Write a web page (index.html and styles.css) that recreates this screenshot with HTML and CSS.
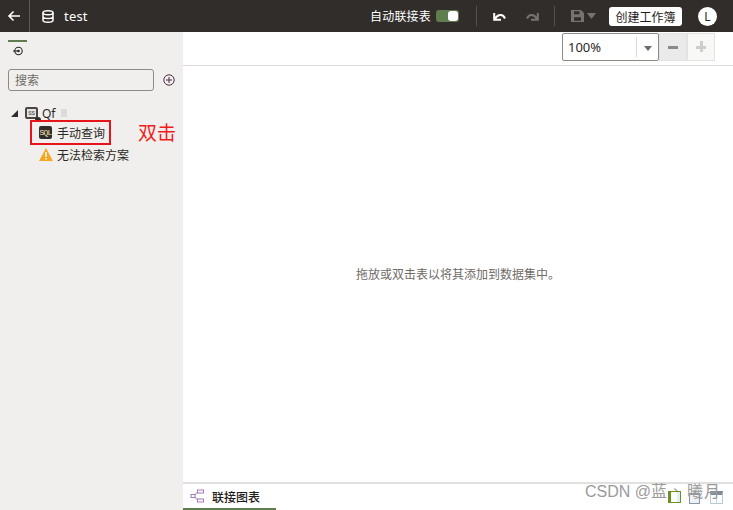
FILE: index.html
```html
<!DOCTYPE html>
<html lang="zh">
<head>
<meta charset="utf-8">
<title>test</title>
<link rel="stylesheet" href="styles.css">
</head>
<body>
<div class="app">
  <header class="topbar">
    <button class="back" aria-label="back">
      <svg width="14" height="12" viewBox="0 0 14 12"><path d="M13 6H2M6.500 1.500 2 6l4.500 4.500" fill="none" stroke="#fff" stroke-width="1.600"/></svg>
    </button>
    <div class="title">
      <svg width="12" height="13" viewBox="0 0 12 13"><g fill="none" stroke="#fff" stroke-width="1.500"><ellipse cx="6" cy="2.800" rx="5" ry="2"/><path d="M1 2.800v7.400c0 1.100 2.200 2 5 2s5-.9 5-2V2.800M1 6.500c0 1.100 2.200 2 5 2s5-.9 5-2"/></g></svg>
      <span class="name">test</span>
    </div>
    <div class="tools">
      <span class="auto">自动联接表</span>
      <span class="toggle"><i></i></span>
      <span class="sep s1"></span>
      <svg class="undo" width="13" height="9" viewBox="0 0 13 9"><path d="M1.200 1v6.800H8M1.800 7.200C4 3 9.500 .5 12 6.500" fill="none" stroke="#fff" stroke-width="2"/></svg>
      <svg class="redo" width="13" height="9" viewBox="0 0 13 9"><path d="M11.800 1v6.800H5M11.200 7.200C9 3 3.500 .5 1 6.500" fill="none" stroke="#77736f" stroke-width="2"/></svg>
      <span class="sep s2"></span>
      <svg class="save" width="13" height="12" viewBox="0 0 13 12"><path fill-rule="evenodd" d="M0 0h10l3 3v9H0zM3 1.200v3h5.500v-3zM3 7.200v3.600h7V7.200z" fill="#77736f"/></svg>
      <svg class="caret" width="9" height="6" viewBox="0 0 9 6"><path d="M0 0h9L4.500 6z" fill="#77736f"/></svg>
      <button class="create">创建工作簿</button>
      <span class="avatar">L</span>
    </div>
  </header>
  <div class="body">
    <aside class="side">
      <div class="sidetab">
        <svg width="12" height="10" viewBox="0 0 12 10"><circle cx="6.500" cy="5" r="3.700" fill="none" stroke="#2b2724" stroke-width="1.100"/><circle cx="6.500" cy="5" r="1.300" fill="#2b2724"/><path d="M1 5h5" stroke="#2b2724" stroke-width="1.100"/></svg>
      </div>
      <div class="search">
        <div class="input">搜索</div>
        <svg width="12" height="12" viewBox="0 0 12 12"><circle cx="6" cy="6" r="5.200" fill="none" stroke="#4a2f46" stroke-width="1"/><path d="M6 3v6M3 6h6" stroke="#4a2f46" stroke-width="1"/></svg>
      </div>
      <ul class="tree">
        <li class="conn">
          <svg class="tri" width="7" height="7" viewBox="0 0 7 7"><path d="M7 0v7H0z" fill="#2f2d2b"/></svg>
          <span class="db">SS</span>
          <span class="qf">Qf</span><span class="blur"></span>
        </li>
        <li class="item sql">
          <span class="sqlicon">SQL</span>
          <span>手动查询</span>
          <span class="hint">双击</span>
        </li>
        <li class="item warn">
          <svg width="14" height="13" viewBox="0 0 14 13"><path d="M7 0 14 13H0z" fill="#f5a623"/><path d="M7 4v5M7 10v1.500" stroke="#fff" stroke-width="1.500"/></svg>
          <span>无法检索方案</span>
        </li>
      </ul>
    </aside>
    <main class="main">
      <div class="zoombar">
        <div class="zoom"><span class="val">100%</span><span class="drop"><svg width="8" height="5" viewBox="0 0 8 5"><path d="M0 0h8L4 5z" fill="#6f6b67"/></svg></span></div>
        <button class="zb minus"><i></i></button>
        <button class="zb plus"><i></i><b></b></button>
      </div>
      <div class="canvas">拖放或双击表以将其添加到数据集中。</div>
      <footer class="tabs">
        <div class="tab">
          <svg width="14" height="14" viewBox="0 0 14 14"><g fill="#fff" stroke="#a878b8" stroke-width="1"><rect x="7.500" y="1" width="6" height="3"/><rect x="7.500" y="10" width="6" height="3"/><rect x="1" y="5.500" width="4" height="3"/></g><path d="M5 6 7.500 3M5 8l2.500 3" stroke="#8a8a8a" stroke-width="1"/></svg>
          <span>联接图表</span>
        </div>
      </footer>
    </main>
  </div>
  <div class="overlay">
    <span class="mark">CSDN @蓝</span>
    <span class="stroke">丶</span>
    <span class="m-a"></span>
    <span class="m-b"></span>
    <span class="m-c"></span>
    <span class="m2">曦月</span>
  </div>
</div>
</body>
</html>
```
FILE: styles.css
```css
* { box-sizing: border-box; }
html, body { margin: 0; height: 100%; }
body { font-family: "Noto Sans CJK SC", "Liberation Sans", sans-serif; color: #2b2724; background: #fff; overflow: hidden; }
ul { list-style: none; margin: 0; padding: 0; }
button { font: inherit; border: 0; padding: 0; background: none; }
.app { width: 733px; height: 510px; display: flex; flex-direction: column; position: relative; overflow: hidden; }

.topbar { height: 32px; background: #312d2a; display: flex; align-items: center; flex: none; color: #fff; }
.back { width: 30px; height: 32px; border-right: 1px solid #5c5855; display: flex; align-items: center; justify-content: center; padding-right: 1px; }
.title { display: flex; align-items: center; padding-left: 12px; gap: 10px; }
.name { font: 13px "Noto Sans", sans-serif; letter-spacing: .2px; }
.tools { margin-left: auto; display: flex; align-items: center; padding-right: 16px; }
.auto { font-size: 12px; line-height: 16px; letter-spacing: .2px; }
.toggle { width: 23px; height: 12px; background: #5f7d4f; border-radius: 3px; margin-left: 5px; display: flex; justify-content: flex-end; padding: 1px; }
.toggle i { width: 10px; height: 10px; background: #fff; border-radius: 3px; }
.sep { width: 1px; height: 20px; background: #55514e; }
.s1 { margin: 0 16px 0 17px; }
.undo { margin-right: 20px; }
.redo { margin-right: 15px; }
.s2 { margin-right: 16px; }
.caret { margin: 0 0 0 3px; }
.create { margin-left: 13px; width: 73px; height: 19px; background: #fff; color: #1f1c1a; border-radius: 3px; font-size: 12px; line-height: 19px; }
.avatar { margin-left: 16px; width: 19px; height: 19px; border-radius: 50%; background: #fff; color: #2b2724; font: 12px/19px "Noto Sans", sans-serif; text-align: center; }

.body { flex: 1; display: flex; min-height: 0; }
.side { width: 183px; flex: none; background: #f0efed; padding: 8px 8px 0; }
.sidetab { width: 19px; height: 21px; border-top: 2px solid #5f7d4f; display: flex; justify-content: center; align-items: flex-start; padding-top: 4px; }
.search { display: flex; align-items: center; gap: 9px; margin-top: 8px; }
.input { width: 146px; height: 22px; border: 1px solid #8f8a85; border-radius: 3px; background: #f0efed; color: #6f6b67; font-size: 12px; line-height: 20px; padding-left: 6px; }
.tree { margin-top: 11px; font-size: 12px; }
.conn { display: flex; align-items: center; height: 22px; padding-left: 3px; }
.tri { margin-right: 7px; margin-top: 1px; }
.db { width: 13px; height: 12px; border: 2px solid #4a4643; border-radius: 2px; font: 5px/8px "Liberation Sans", sans-serif; text-align: center; background: #e6e4e2; margin-right: 4px; position: relative; }
.db::after { content: ""; position: absolute; right: -5px; bottom: -4px; width: 6px; height: 4px; border-radius: 3px 3px 0 0; background: #312d2a; }
.qf { font: 12px "Noto Sans", sans-serif; }
.blur { width: 6px; height: 8px; background: #dcdbd9; margin-left: 5px; }
.item { display: flex; align-items: center; gap: 5px; }
.sql { position: relative; outline: 2px solid #e8141c; outline-offset: -2px; width: 81px; margin-left: 22px; padding-left: 9px; height: 25px; margin-top: -4px; white-space: nowrap; }
.sqlicon { width: 13px; height: 13px; background: #312d2a; color: #f5e2b8; border-radius: 2px; font: 8px/13px "Liberation Mono", monospace; text-align: center; letter-spacing: -.8px; }
.hint { position: absolute; left: 108px; top: -1px; color: #f01c1c; font-size: 19px; line-height: 25px; }
.warn { height: 21px; padding-left: 31px; margin-top: -1px; gap: 4px; }

.main { flex: 1; display: flex; flex-direction: column; min-width: 0; }
.zoombar { height: 34px; flex: none; border-bottom: 1px solid #dcdbd9; display: flex; align-items: flex-start; padding: 1px 18px 0 379px; }
.zoom { width: 97px; height: 28px; border: 1px solid #8f8a85; border-radius: 2px; display: flex; align-items: center; background: #fff; font: 13px "Noto Sans", sans-serif; flex: none; }
.val { width: 73px; padding-left: 5px; }
.drop { flex: 1; height: 20px; border-left: 1px solid #dcdbd9; display: flex; align-items: center; justify-content: center; padding-top: 3px; }
.zb { width: 28px; height: 28px; position: relative; border: 1px solid #e4e3e1; display: block; flex: none; }
.minus { background: #ebeaea; }
.plus { background: #f8f8f7; }
.zb i { position: absolute; left: 8px; right: 8px; top: 12px; height: 3px; background: #8a8785; }
.plus i { background: #cfcdcb; }
.plus b { position: absolute; top: 7px; bottom: 8px; left: 12px; width: 3px; background: #cfcdcb; }

.canvas { flex: 1; display: flex; align-items: center; justify-content: center; color: #6f6b67; font-size: 12px; padding-bottom: 1px; }
.tabs { height: 28px; flex: none; border-top: 2px solid #e2e1e0; display: flex; }
.tab { width: 93px; display: flex; align-items: center; gap: 8px; padding-left: 7px; border-bottom: 2px solid #5f7d4f; font-size: 12px; color: #1f1c1a; font-weight: 500; }

.overlay { position: absolute; left: 585px; top: 481px; width: 148px; height: 29px; color: #9a9a9a; font: 16px/22px "Liberation Sans", "Noto Sans CJK SC", sans-serif; white-space: nowrap; }
.stroke { position: absolute; left: 85px; top: 0; font-size: 14px; }
.m-a { position: absolute; left: 83px; top: 10px; width: 13px; height: 12px; background: linear-gradient(90deg, #fff 0 6px, #dff0f5 6px); border: 1px solid #6f8f22; border-left-width: 3px; }
.m-b { position: absolute; left: 104px; top: 12px; width: 11px; height: 11px; border: 1px solid #8a97a5; border-top-width: 2px; background: #eef2f6; }
.m-c { position: absolute; left: 125px; top: 10px; width: 13px; height: 13px; border: 1px solid #b9c9d6; border-top: 4px solid #7f8b96; background: linear-gradient(90deg, #fff 0 5px, #c9d6e0 5px 6px, #fff 6px); }
.m2 { position: absolute; left: 102px; top: 0; letter-spacing: 1px; }
```
